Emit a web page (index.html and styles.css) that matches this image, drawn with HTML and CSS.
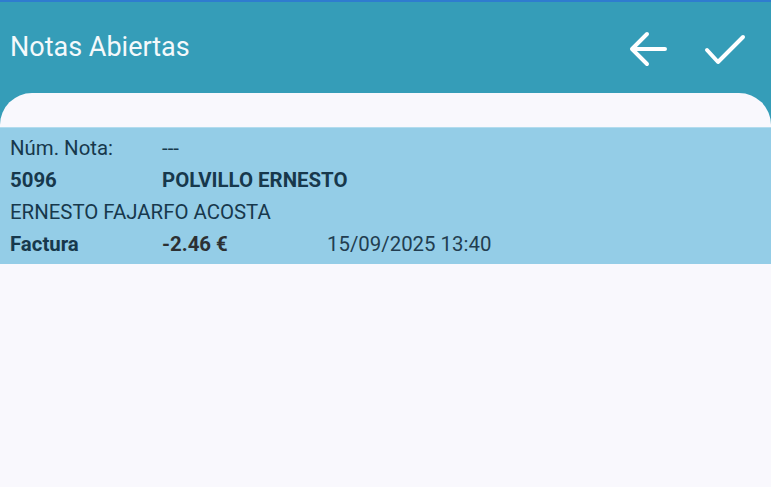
FILE: index.html
```html
<!DOCTYPE html>
<html lang="es">
<head>
    <meta charset="UTF-8">
    <meta name="viewport" content="width=device-width, initial-scale=1.0">
    <title>Notas Abiertas</title>
    <link rel="stylesheet" href="styles.css">
</head>
<body>

    <!-- Barra superior -->
    <header class="app-bar">
        <h1 class="app-title">Notas Abiertas</h1>
        <div class="app-actions">
            <button class="icon-btn back-btn" aria-label="Volver">
                <svg width="40" height="40" viewBox="0 0 40 40">
                    <path d="M37 20 H5 M19 5 L4 20 L19 35" fill="none" stroke="#fff" stroke-width="4" stroke-linecap="round" stroke-linejoin="round"/>
                </svg>
            </button>
            <button class="icon-btn ok-btn" aria-label="Aceptar">
                <svg width="44" height="40" viewBox="0 0 44 40">
                    <path d="M4 21 L15 33 L40 8" fill="none" stroke="#fff" stroke-width="4" stroke-linecap="round" stroke-linejoin="round"/>
                </svg>
            </button>
        </div>
    </header>

    <div class="content">
        <div class="nota-row">
            <span class="label">Núm. Nota:</span>
            <span class="wide">---</span>

            <span class="strong">5096</span>
            <span class="strong wide">POLVILLO ERNESTO</span>

            <span class="full">ERNESTO FAJARFO ACOSTA</span>

            <span class="strong">Factura</span>
            <span class="strong amount">-2.46 €</span>
            <span class="date">15/09/2025 13:40</span>
        </div>
    </div>

</body>
</html>
```

FILE: styles.css
```css
:root {
    --teal: #359db8;
    --top-line: #2f7ccf;
    --card: #f9f8fd;
    --row: #94cde7;
    --ink: #17384c;
}
body {
    margin: 0;
    padding: 0;
    font-family: Roboto, "Liberation Sans", sans-serif;
    background-color: var(--teal);
    height: 487px;
    overflow: hidden;
    display: flex;
    flex-direction: column;
}
.app-bar {
    border-top: 2px solid var(--top-line);
    height: 91px;
    display: flex;
    align-items: center;
    padding: 0 24px 0 10px;
}
.app-title {
    margin: 0;
    font-size: 27px;
    font-weight: 400;
    color: #f4f9fb;
    padding-bottom: 1px;
}
.app-actions {
    margin-left: auto;
    display: flex;
    align-items: center;
    gap: 35px;
    padding-top: 2px;
}
.icon-btn {
    background: none;
    border: none;
    padding: 0;
    margin: 0;
    display: block;
    cursor: pointer;
}
.icon-btn svg {
    display: block;
}
.content {
    flex: 1;
    background-color: var(--card);
    border-radius: 32px 32px 0 0;
    padding-top: 34px;
}
.nota-row {
    background-color: var(--row);
    border-top: 1px solid #b3dcee;
    padding: 4px 10px;
    display: grid;
    grid-template-columns: 152px 165px 1fr;
    line-height: 32px;
    font-size: 20.4px;
    color: var(--ink);
}
.nota-row .wide {
    grid-column: span 2;
}
.nota-row .full {
    grid-column: span 3;
}
.strong {
    font-weight: 700;
}
.amount {
    color: #2c3033;
}
.date {
    color: #223d50;
}
```
